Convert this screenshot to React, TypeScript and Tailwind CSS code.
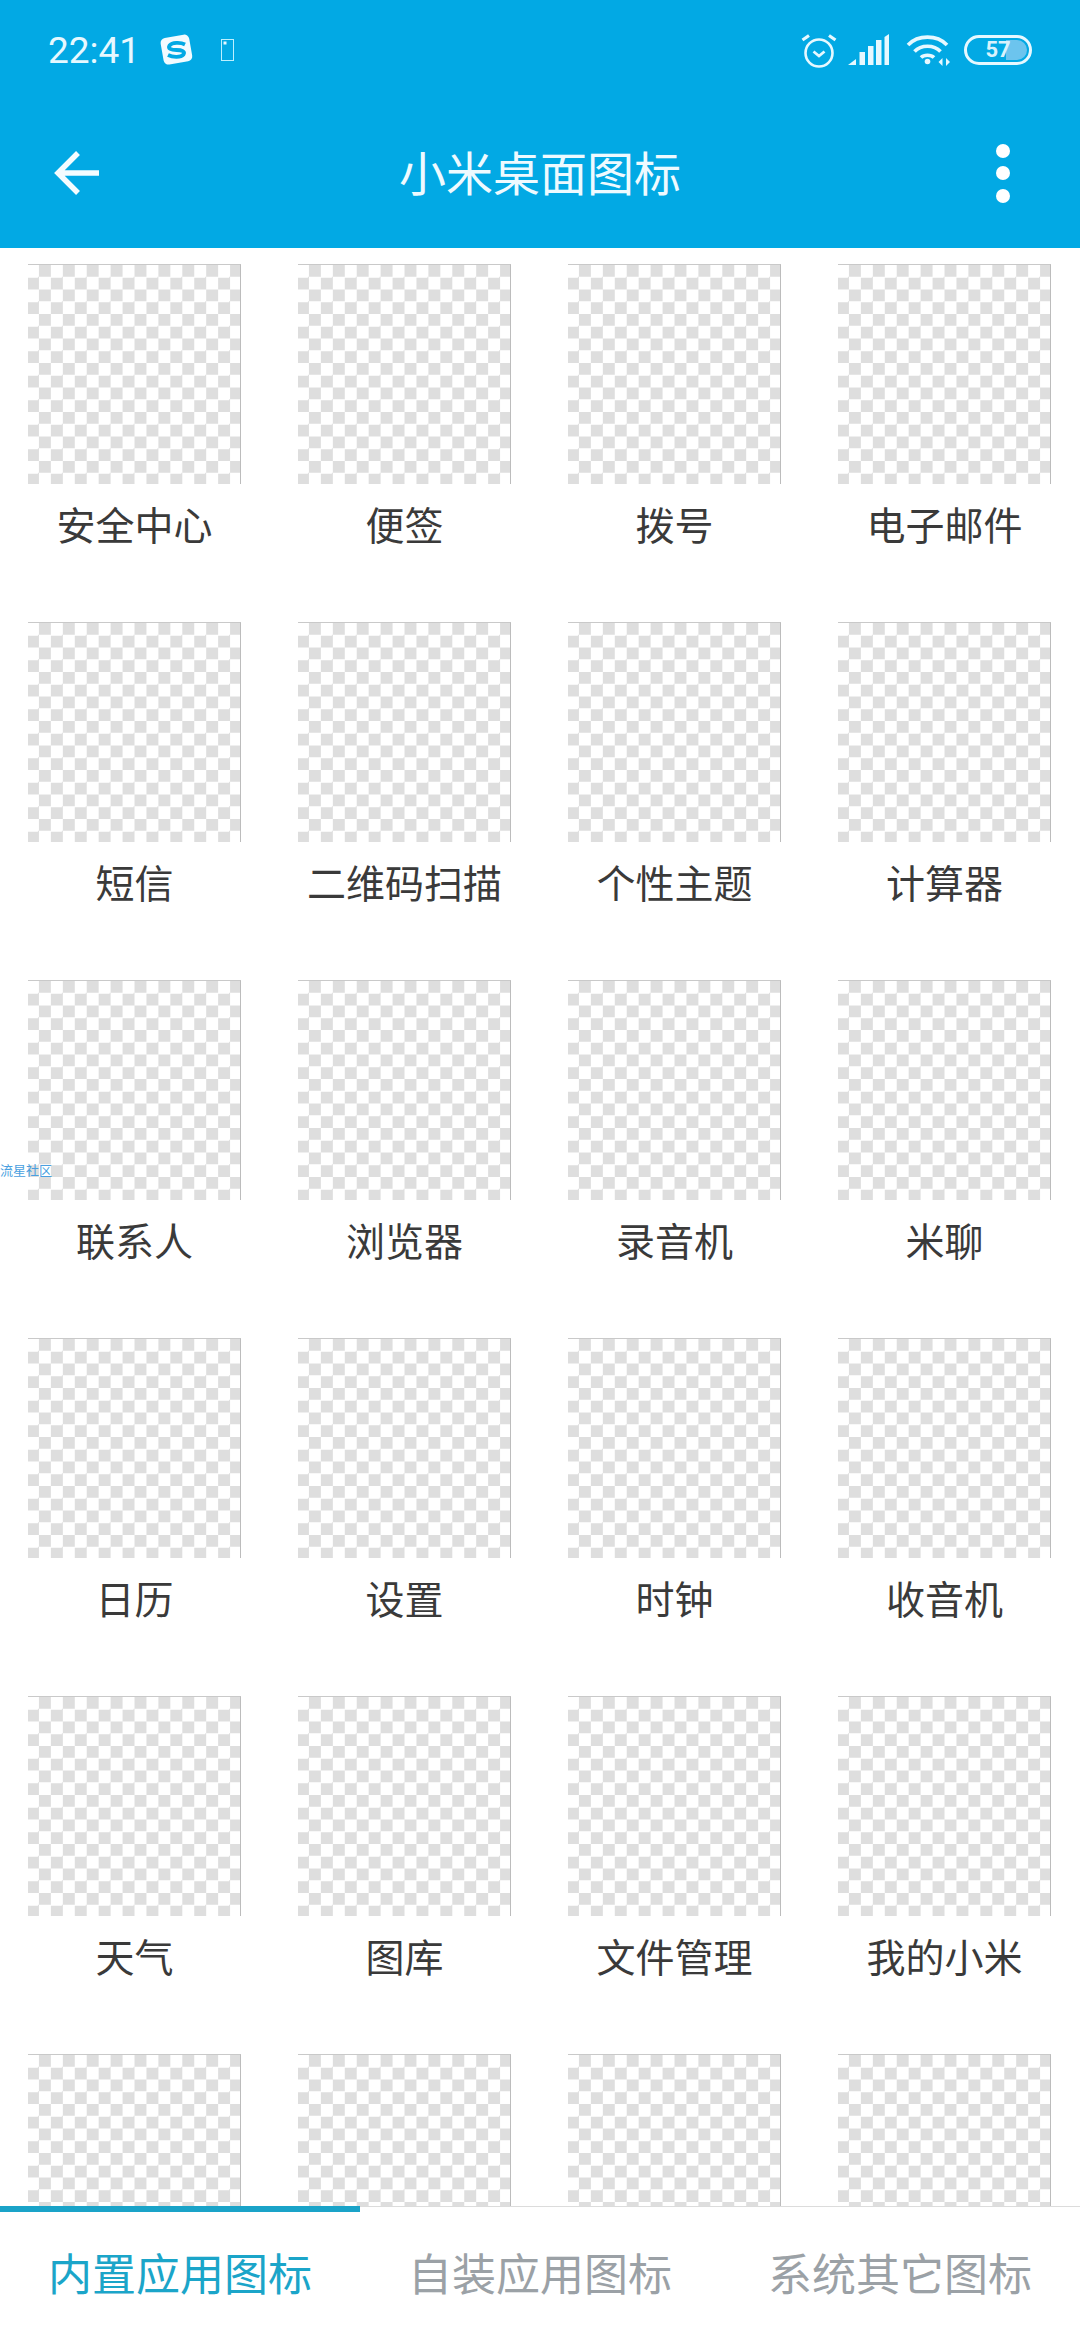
const labels = [
  "安全中心", "便签", "拨号", "电子邮件",
  "短信", "二维码扫描", "个性主题", "计算器",
  "联系人", "浏览器", "录音机", "米聊",
  "日历", "设置", "时钟", "收音机",
  "天气", "图库", "文件管理", "我的小米",
  "", "", "", "",
];

function StatusLeft() {
  return (
    <div className="flex items-center">
      <span className="font-['Roboto',sans-serif] text-[37px] leading-none font-normal text-[#e6f8ff]">22:41</span>
      <svg className="ml-[19px]" width="36" height="34" viewBox="0 0 36 34">
        <rect x="3" y="3" width="29" height="27" rx="5" fill="#f2fbff" transform="rotate(-10 18 17)" />
        <path d="M26 11.5C21 9 13 9.5 10.5 12.5C8.5 15.5 12 17 17.5 17C23 17 26.5 18.5 24.5 21.5C22 24.5 14 24.5 9 22" fill="none" stroke="#02a9e4" strokeWidth="3.8" />
      </svg>
      <svg className="ml-[26px]" width="13" height="22" viewBox="0 0 13 22" fill="none">
        <rect x="0.5" y="0.5" width="12" height="21" stroke="#bdf0ff" />
        <rect x="2.5" y="2.5" width="3" height="3" fill="#e6f8ff" />
      </svg>
    </div>
  );
}

function StatusRight() {
  return (
    <div className="flex items-center">
      <svg width="36" height="36" viewBox="0 0 36 36" fill="none" stroke="#e6f8ff" strokeWidth="2.6">
        <circle cx="18" cy="21" r="13.5" />
        <path d="M12.5 19.5L18 24L23.5 19.5" strokeWidth="2.8" />
        <path d="M1.5 8L8 3.5M34.5 8L28 3.5" strokeWidth="3.2" />
      </svg>
      <svg className="ml-[11px]" width="42" height="32" viewBox="0 0 42 32" fill="#e6f8ff">
        <path d="M0 31L8 25V31Z" />
        <rect x="11.5" y="18" width="5.5" height="13" />
        <rect x="20" y="12" width="5.5" height="19" />
        <rect x="28" y="6" width="5.5" height="25" />
        <path d="M36.5 3L41 0V31H36.5Z" />
      </svg>
      <svg className="ml-[16px]" width="44" height="34" viewBox="0 0 44 34" fill="none" stroke="#e6f8ff" strokeWidth="3.6">
        <path d="M2 12C12 1.5 31 1.5 41 12" />
        <path d="M8.5 18.5C15 11.5 28 11.5 34.5 18.5" />
        <path d="M15 24.5C18 21.5 25 21.5 28 24.5" />
        <circle cx="21.5" cy="28.5" r="2.8" fill="#e6f8ff" stroke="none" />
        <path d="M36.5 25L32.5 29L36.5 33Z M40 25L44 29L40 33Z" fill="#e6f8ff" stroke="none" />
      </svg>
      <div className="relative ml-[14px] flex h-[30px] w-[68px] items-center justify-center overflow-hidden rounded-full border-[3px] border-[#e6f8ff]">
        <div className="absolute top-[2px] right-[2px] bottom-[2px] w-[21px] rounded-r-full bg-[#6cc4ee]" />
        <span className="relative font-['Roboto',sans-serif] text-[22px] leading-none font-bold text-[#d8f2fc]">57</span>
      </div>
    </div>
  );
}

function IconTile() {
  return (
    <div className="h-[220px] w-[213px] border-t border-r border-t-[#c9c9c9] border-r-[#bcbcbc] bg-[repeating-conic-gradient(#dedede_0_25%,#ffffff_0_50%)] bg-[length:23.9px_24.5px] bg-[position:-1px_0px]" />
  );
}

export default function App() {
  return (
    <div className="relative flex h-[2340px] w-[1080px] flex-col overflow-hidden bg-white font-['Noto_Sans_CJK_SC','Noto_Sans',sans-serif]">
      <header className="h-[248px] shrink-0 bg-[#02a9e4]">
        <div className="flex h-[100px] items-center justify-between px-[48px]">
          <StatusLeft />
          <StatusRight />
        </div>
        <div className="grid h-[148px] grid-cols-[160px_1fr_160px] items-center">
          <div className="pb-[2px] pl-[54px]">
            <svg width="46" height="46" viewBox="0 0 46 46" fill="none" stroke="#f4fcff" strokeWidth="5.5">
              <path d="M45 23H4M24 3L4 23L24 43" />
            </svg>
          </div>
          <h1 className="pb-[8px] text-center text-[47px] leading-none font-normal text-[#eefaff]">小米桌面图标</h1>
          <div className="flex flex-col items-end gap-[8.5px] pr-[70px] pb-[2px]">
            <span className="h-[14px] w-[14px] rounded-full bg-white" />
            <span className="h-[14px] w-[14px] rounded-full bg-white" />
            <span className="h-[14px] w-[14px] rounded-full bg-white" />
          </div>
        </div>
      </header>

      <main className="min-h-0 flex-1 overflow-hidden pt-[16px]">
        <div className="grid grid-cols-[repeat(4,270px)] auto-rows-[358px]">
          {labels.map((label, i) => (
            <div key={`${label}-${i}`} className="flex flex-col pl-[28px]">
              <IconTile />
              <p className="mt-[17px] w-[213px] text-center text-[39px] leading-[44px] whitespace-nowrap text-[#3a3a3a]">{label}</p>
            </div>
          ))}
        </div>
      </main>

      {/* watermark sits over the first tile of row 3 */}
      <span className="absolute top-[1162px] left-0 text-[13px] leading-[16px] text-[#4a9fe0]">流星社区</span>

      <nav className="relative grid h-[134px] shrink-0 grid-cols-3 items-center border-t border-t-[#dcdcdc] bg-white pb-[4px]">
        <div className="absolute top-[-1px] left-0 h-[6px] w-[360px] bg-[#1aa3c8]" />
        <span className="text-center text-[44px] leading-none text-[#1ba5c9]">内置应用图标</span>
        <span className="text-center text-[44px] leading-none text-[#9ba1a6]">自装应用图标</span>
        <span className="text-center text-[44px] leading-none text-[#9ba1a6]">系统其它图标</span>
      </nav>
    </div>
  );
}
